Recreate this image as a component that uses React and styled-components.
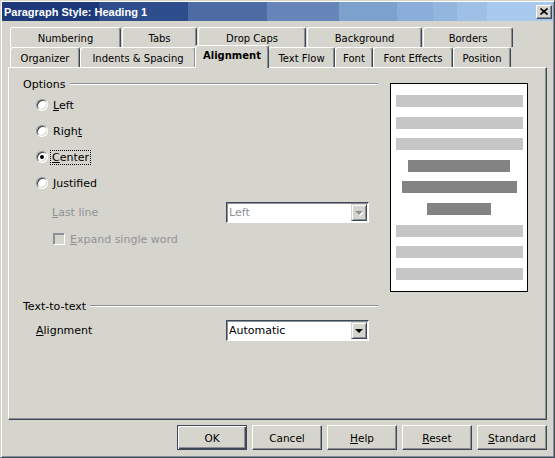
import React from 'react';
import styled, { createGlobalStyle } from 'styled-components';

const BG = '#d6d5cd';
const DARK = '#3f4859';
const SHADOW = '#8c8f96';
const DIS = '#909298';

const Global = createGlobalStyle`
  html, body { margin: 0; padding: 0; background: ${BG}; }
  body { font-family: "DejaVu Sans", "Noto Sans", sans-serif; font-size: 11px; color: #000; }
  * { box-sizing: border-box; }
`;

const Window = styled.div`
  width: 555px;
  height: 458px;
  display: flex;
  flex-direction: column;
  background: ${BG};
  border: 1px solid;
  border-color: ${BG} ${DARK} ${DARK} ${BG};
  box-shadow: inset 1px 1px 0 #fff, inset -1px -1px 0 ${SHADOW};
  padding: 1px;
`;

const TitleBar = styled.div`
  height: 19px;
  display: flex;
  align-items: center;
  justify-content: space-between;
  padding: 0 1px 0 2px;
  background: linear-gradient(to right,
    #1d3979 0px, #1d3979 97px,
    #2e4d8d 97px, #2e4d8d 186px,
    #4e6ca4 186px, #4e6ca4 265px,
    #6885b9 265px, #6885b9 337px,
    #7ca1cc 337px, #7ca1cc 395px,
    #8aaed9 395px, #8aaed9 431px,
    #93b6df 431px, #93b6df 455px,
    #9ebfe6 455px, #9ebfe6 485px,
    #a8caef 485px, #a8caef 100%);
`;

const Title = styled.span`
  color: #fff;
  font-family: "Liberation Sans", Arial, sans-serif;
  font-weight: bold;
  font-size: 11px;
  padding-top: 1px;
`;

const CloseBtn = styled.div`
  width: 16px;
  height: 14px;
  background: ${BG};
  border: 1px solid;
  border-color: #fff ${DARK} ${DARK} #fff;
  box-shadow: inset -1px -1px 0 ${SHADOW};
  display: flex;
  align-items: center;
  justify-content: center;
`;

const Content = styled.div`
  flex: 1;
  display: flex;
  flex-direction: column;
  padding: 0 6px;
`;

const TabRow = styled.div`
  display: flex;
  align-items: flex-end;
  height: 20px;
  margin-left: 2px;
  gap: ${p => p.$gap}px;
  margin-top: ${p => p.$top || 0}px;
  position: relative;
  z-index: ${p => p.$z || 0};
`;

const Tab = styled.div`
  width: ${p => p.$w}px;
  height: ${p => (p.$sel ? 23 : 20)}px;
  margin-bottom: ${p => (p.$sel ? -1 : 0)}px;
  margin-left: ${p => (p.$sel ? -1 : 0)}px;
  margin-right: ${p => (p.$sel ? -1 : 0)}px;
  flex-shrink: 0;
  background: ${BG};
  border-top: 1px solid #fff;
  border-left: 1px solid #fff;
  border-right: 1px solid ${DARK};
  border-radius: 3px 3px 0 0;
  box-shadow: inset -1px 0 0 ${SHADOW};
  display: flex;
  align-items: ${p => (p.$sel ? 'flex-start' : 'center')};
  padding-top: ${p => (p.$sel ? 4 : 1)}px;
  justify-content: center;
  font-size: 10px;
  font-weight: ${p => (p.$sel ? 'bold' : 'normal')};
  position: relative;
  z-index: ${p => (p.$sel ? 2 : 1)};
  white-space: nowrap;
`;

const Panel = styled.div`
  height: 353px;
  border: 1px solid;
  border-color: #fff ${DARK} ${DARK} #fff;
  box-shadow: inset -1px -1px 0 ${SHADOW};
  display: flex;
  padding: 9px 0 0 14px;
  gap: 12px;
`;

const LeftCol = styled.div`
  width: 355px;
  display: flex;
  flex-direction: column;
`;

const GroupHeader = styled.div`
  height: 14px;
  display: flex;
  align-items: center;
  gap: ${p => p.$gap}px;
  margin-top: ${p => p.$top || 0}px;
`;

const GroupLine = styled.div`
  flex: 1;
  height: 2px;
  border-top: 1px solid ${SHADOW};
  border-bottom: 1px solid #fff;
`;

const Row = styled.div`
  height: ${p => p.$h}px;
  display: flex;
  align-items: center;
  padding-left: ${p => p.$indent}px;
  margin-top: ${p => p.$top || 0}px;
  color: ${p => (p.$disabled ? DIS : '#000')};
`;

const Radio = styled.span`
  width: 12px;
  height: 12px;
  border-radius: 50%;
  background: #fff;
  border: 1px solid;
  border-color: ${SHADOW} #fff #fff ${SHADOW};
  box-shadow: inset 1px 1px 0 #404040, inset -1px -1px 0 ${BG};
  display: flex;
  align-items: center;
  justify-content: center;
  margin-right: 5px;
  flex-shrink: 0;
  &::after {
    content: '';
    width: 4px;
    height: 4px;
    border-radius: 50%;
    background: ${p => (p.$on ? '#000' : 'transparent')};
  }
`;

const Check = styled.span`
  width: 12px;
  height: 12px;
  background: ${BG};
  border: 1px solid;
  border-color: ${SHADOW} #fff #fff ${SHADOW};
  box-shadow: inset 1px 1px 0 ${SHADOW};
  margin-right: 5px;
  flex-shrink: 0;
`;

const Focus = styled.span`
  outline: 1px dotted #000;
  outline-offset: 0px;
  padding: 0 1px;
  margin-left: -2px;
`;

const Label = styled.span`
  width: ${p => p.$w}px;
  flex-shrink: 0;
`;

const Select = styled.div`
  width: 143px;
  height: 21px;
  background: #fff;
  border: 1px solid;
  border-color: ${DARK} #fff #fff ${DARK};
  box-shadow: inset 1px 1px 0 ${SHADOW};
  display: flex;
  align-items: center;
  padding: 1px 1px 1px 2px;
  color: ${p => (p.$disabled ? DIS : '#000')};
`;

const SelectText = styled.span`
  flex: 1;
`;

const DropBtn = styled.span`
  width: 16px;
  height: 17px;
  background: ${BG};
  border: 1px solid;
  border-color: ${BG} ${DARK} ${DARK} ${BG};
  box-shadow: inset 1px 1px 0 #fff, inset -1px -1px 0 ${SHADOW};
  display: flex;
  align-items: center;
  justify-content: center;
  &::after {
    content: '';
    width: 0;
    height: 0;
    border-left: 4px solid transparent;
    border-right: 4px solid transparent;
    border-top: 4px solid ${p => (p.$disabled ? DIS : '#000')};
    filter: ${p => (p.$disabled ? 'drop-shadow(1px 1px 0 #fff)' : 'none')};
  }
`;

const Preview = styled.div`
  width: 138px;
  height: 209px;
  margin-top: 6px;
  background: #fff;
  border: 1px solid #000;
  display: flex;
  flex-direction: column;
  align-items: center;
  padding-top: 11px;
  gap: 9.6px;
`;

const Bar = styled.div`
  height: 12px;
  flex-shrink: 0;
  background: ${p => (p.$dark ? '#838383' : '#c6c6c6')};
`;

const ButtonRow = styled.div`
  display: flex;
  justify-content: flex-end;
  gap: 5px;
  margin-top: 5px;
`;

const Button = styled.div`
  width: 70px;
  height: 25px;
  display: flex;
  align-items: center;
  justify-content: center;
  font-size: 10.5px;
  background: ${BG};
  border: 1px solid;
  border-color: ${p => (p.$def ? DARK : `#fff ${DARK} ${DARK} #fff`)};
  box-shadow: ${p =>
    p.$def
      ? `inset 1px 1px 0 #fff, inset -1px -1px 0 ${DARK}, inset -2px -2px 0 ${SHADOW}`
      : `inset -1px -1px 0 ${SHADOW}`};
`;

const U = styled.span`
  text-decoration: underline;
`;

const row1 = [
  ['Numbering', 111],
  ['Tabs', 75],
  ['Drop Caps', 108],
  ['Background', 115],
  ['Borders', 90],
];

const row2 = [
  ['Organizer', 70],
  ['Indents & Spacing', 116],
  ['Alignment', 74, true],
  ['Text Flow', 67],
  ['Font', 38],
  ['Font Effects', 80],
  ['Position', 58],
];

const bars = [
  [127, false],
  [127, false],
  [127, false],
  [102, true],
  [115, true],
  [64, true],
  [127, false],
  [127, false],
  [127, false],
];

export default function App() {
  return (
    <>
      <Global />
      <Window>
        <TitleBar>
          <Title>Paragraph Style: Heading 1</Title>
          <CloseBtn>
            <svg width="8" height="7" viewBox="0 0 8 7">
              <path d="M0.5 0.5 L7.5 6.5 M7.5 0.5 L0.5 6.5" stroke="#000" strokeWidth="1.6" />
            </svg>
          </CloseBtn>
        </TitleBar>
        <Content>
          <TabRow $gap={1} $top={6}>
            {row1.map(([t, w]) => (
              <Tab key={t} $w={w}>{t}</Tab>
            ))}
          </TabRow>
          <TabRow $gap={0} $z={2}>
            {row2.map(([t, w, s]) => (
              <Tab key={t} $w={w} $sel={s}>{t}</Tab>
            ))}
          </TabRow>
          <Panel>
            <LeftCol>
              <GroupHeader $gap={5}>
                <span>Options</span>
                <GroupLine />
              </GroupHeader>
              <Row $h={26} $indent={13} $top={1}>
                <Radio /><span><U>L</U>eft</span>
              </Row>
              <Row $h={26} $indent={13}>
                <Radio /><span>Righ<U>t</U></span>
              </Row>
              <Row $h={26} $indent={13}>
                <Radio $on /><Focus><U>C</U>enter</Focus>
              </Row>
              <Row $h={26} $indent={13}>
                <Radio /><span><U>J</U>ustified</span>
              </Row>
              <Row $h={21} $indent={29} $top={6} $disabled>
                <Label $w={174}><U>L</U>ast line</Label>
                <Select $disabled>
                  <SelectText>Left</SelectText>
                  <DropBtn $disabled />
                </Select>
              </Row>
              <Row $h={26} $indent={30} $top={3} $disabled>
                <Check /><span><U>E</U>xpand single word</span>
              </Row>
              <GroupHeader $gap={4} $top={47}>
                <span>Text-to-text</span>
                <GroupLine />
              </GroupHeader>
              <Row $h={21} $indent={13} $top={7}>
                <Label $w={190}><U>A</U>lignment</Label>
                <Select>
                  <SelectText>Automatic</SelectText>
                  <DropBtn />
                </Select>
              </Row>
            </LeftCol>
            <Preview>
              {bars.map(([w, d], i) => (
                <Bar key={i} $dark={d} style={{ width: w }} />
              ))}
            </Preview>
          </Panel>
          <ButtonRow>
            <Button $def>OK</Button>
            <Button>Cancel</Button>
            <Button><span><U>H</U>elp</span></Button>
            <Button><span><U>R</U>eset</span></Button>
            <Button><span><U>S</U>tandard</span></Button>
          </ButtonRow>
        </Content>
      </Window>
    </>
  );
}
